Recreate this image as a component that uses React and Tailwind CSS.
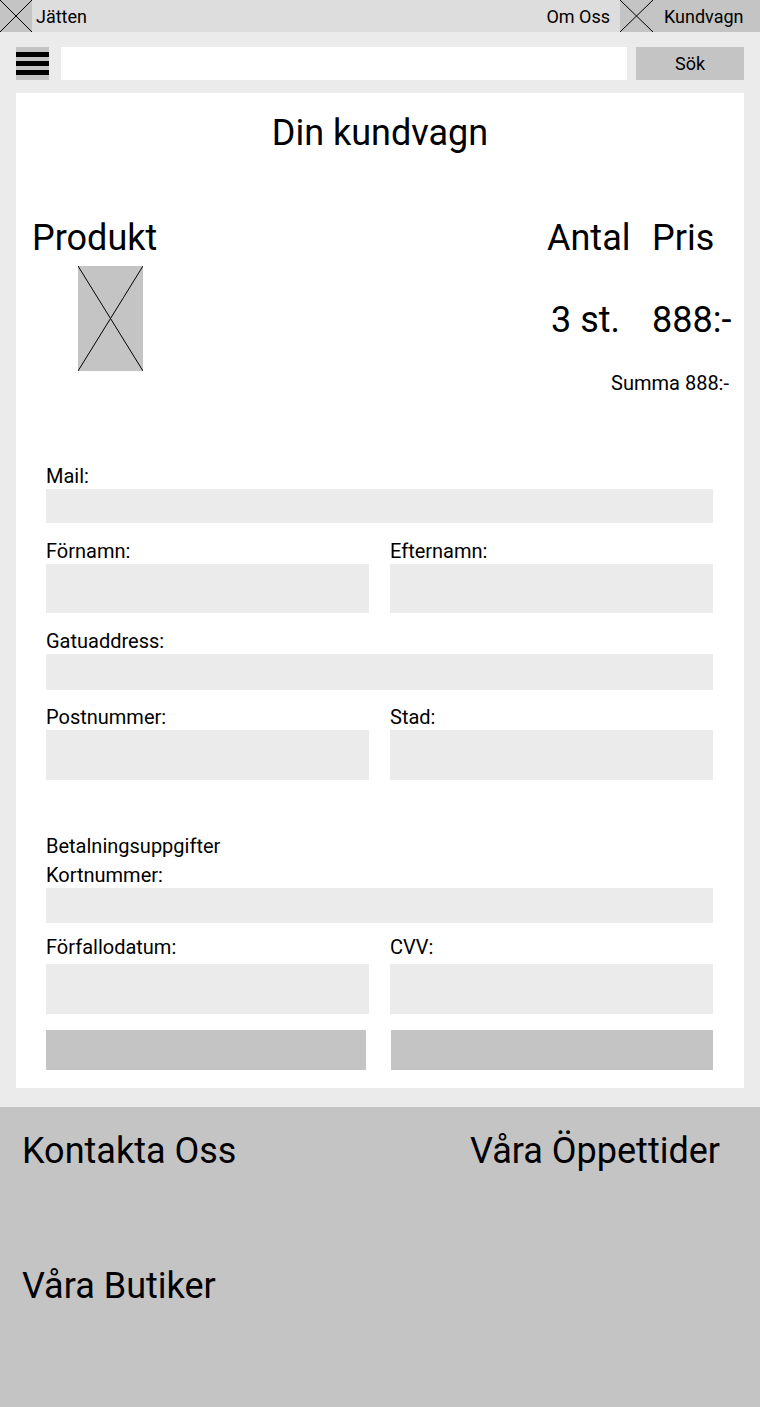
import React from "react";

function XBox({ className }) {
  return (
    <div className={"relative bg-[#c4c4c4] " + className}>
      <svg className="absolute inset-0 w-full h-full" viewBox="0 0 100 100" preserveAspectRatio="none">
        <line x1="0" y1="0" x2="100" y2="100" stroke="#000" strokeWidth="1" vectorEffect="non-scaling-stroke" />
        <line x1="100" y1="0" x2="0" y2="100" stroke="#000" strokeWidth="1" vectorEffect="non-scaling-stroke" />
      </svg>
    </div>
  );
}

function Label({ children, className = "" }) {
  return <div className={"text-[20px] leading-[21px] text-black " + className}>{children}</div>;
}

function Field({ h }) {
  return <div className={"bg-[#ebebeb] w-full " + h} />;
}

export default function App() {
  return (
    <div className="w-[760px] min-h-[1407px] bg-[#ebebeb] flex flex-col" style={{ fontFamily: "Roboto, 'Noto Sans', sans-serif" }}>
      {/* Top bar */}
      <div className="h-8 bg-[#dddddd] flex items-stretch justify-between">
        <div className="flex items-center">
          <XBox className="w-8 h-8" />
          <span className="ml-1 pt-[2px] text-[18px] leading-none text-black">Jätten</span>
        </div>
        <div className="flex items-stretch">
          <span className="flex items-center pt-[2px] text-[18px] leading-none text-black pr-[10px]">Om Oss</span>
          <div className="flex items-center bg-[#c4c4c4] w-[140px]">
            <XBox className="w-[33px] h-8" />
            <span className="ml-[11px] pt-[2px] text-[18px] leading-none text-black">Kundvagn</span>
          </div>
        </div>
      </div>

      {/* Search row */}
      <div className="px-4 mt-[15px] flex h-[33px]">
        <div className="w-[33px] h-[33px] bg-[#c4c4c4] flex flex-col justify-center gap-[4px]">
          <div className="h-[5px] bg-black" />
          <div className="h-[5px] bg-black" />
          <div className="h-[5px] bg-black" />
        </div>
        <div className="ml-3 w-[566px] bg-white" />
        <div className="ml-[9px] flex-1 bg-[#c4c4c4] flex items-center justify-center text-[18px] text-black">Sök</div>
      </div>

      {/* Card */}
      <div className="mx-4 mt-[13px] bg-white h-[995px] flex flex-col">
        <div className="text-center text-[36px] leading-[40px] mt-[20px] text-black">Din kundvagn</div>

        <div className="mt-[65px] flex justify-between">
          <div className="pl-4 flex flex-col">
            <div className="text-[36px] leading-[40px] text-black">Produkt</div>
            <XBox className="ml-[46px] mt-[8px] w-[65px] h-[105px]" />
          </div>
          <div className="pr-[14px] flex flex-col items-end">
            <div className="flex text-[36px] leading-[40px] text-black">
              <div className="w-[105px]">Antal</div>
              <div className="w-[78px]">Pris</div>
            </div>
            <div className="flex text-[36px] leading-[40px] text-black mt-[42px]">
              <div className="w-[105px] pl-[4px]">3 st.</div>
              <div className="w-[78px]">888:-</div>
            </div>
            <div className="mt-[33px] mr-[1px] text-[20px] leading-[21px] text-black">Summa 888:-</div>
          </div>
        </div>

        <div className="px-[30px] mr-px mt-[72px] flex flex-col">
          <Label>Mail:</Label>
          <div className="mt-[2px]"><Field h="h-[34px]" /></div>

          <div className="mt-[18px] flex gap-[21px]">
            <div className="flex-1">
              <Label>Förnamn:</Label>
              <div className="mt-[2px]"><Field h="h-[49px]" /></div>
            </div>
            <div className="flex-1">
              <Label>Efternamn:</Label>
              <div className="mt-[2px]"><Field h="h-[49px]" /></div>
            </div>
          </div>

          <div className="mt-[18px]">
            <Label>Gatuaddress:</Label>
            <div className="mt-[2px]"><Field h="h-[36px]" /></div>
          </div>

          <div className="mt-[17px] flex gap-[21px]">
            <div className="flex-1">
              <Label>Postnummer:</Label>
              <div className="mt-[2px]"><Field h="h-[50px]" /></div>
            </div>
            <div className="flex-1">
              <Label>Stad:</Label>
              <div className="mt-[2px]"><Field h="h-[50px]" /></div>
            </div>
          </div>

          <Label className="mt-[56px]">Betalningsuppgifter</Label>
          <Label className="mt-[8px]">Kortnummer:</Label>
          <div className="mt-[2px]"><Field h="h-[35px]" /></div>

          <div className="mt-[14px] flex gap-[21px]">
            <div className="flex-1">
              <Label>Förfallodatum:</Label>
              <div className="mt-[6px]"><Field h="h-[50px]" /></div>
            </div>
            <div className="flex-1">
              <Label>CVV:</Label>
              <div className="mt-[6px]"><Field h="h-[50px]" /></div>
            </div>
          </div>

          <div className="mt-[16px] flex justify-between">
            <div className="w-[320px] h-[40px] bg-[#c4c4c4]" />
            <div className="w-[322px] h-[40px] bg-[#c4c4c4]" />
          </div>
        </div>
      </div>

      {/* Footer */}
      <div className="mt-[19px] h-[300px] bg-[#c4c4c4] px-[22px] pt-[22px] flex flex-col">
        <div className="flex justify-between pr-[18px]">
          <span className="text-[36px] leading-[44px] text-black">Kontakta Oss</span>
          <span className="text-[36px] leading-[44px] text-black">Våra Öppettider</span>
        </div>
        <div className="mt-[91px] text-[36px] leading-[44px] text-black">Våra Butiker</div>
      </div>
    </div>
  );
}
